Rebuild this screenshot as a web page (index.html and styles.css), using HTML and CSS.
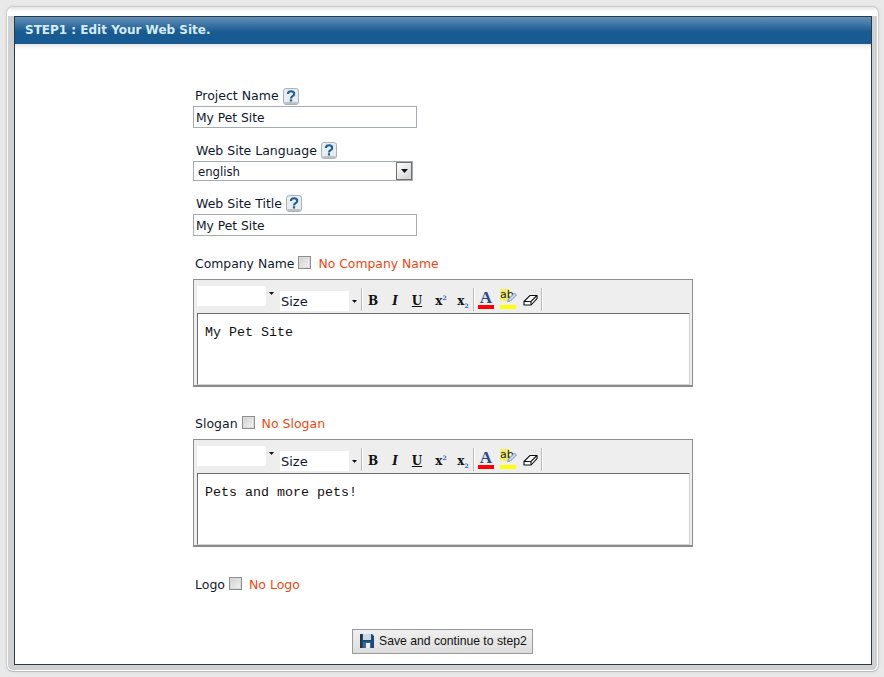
FILE: index.html
```
<!DOCTYPE html>
<html lang="en">
<head>
<meta charset="utf-8">
<title>Step 1</title>
<link rel="stylesheet" href="styles.css">
</head>
<body>
<svg class="defs" width="0" height="0" aria-hidden="true">
  <symbol id="help" viewBox="0 0 16 17">
    <rect x="0.5" y="0.5" width="15" height="16" rx="2.5" fill="#e8edf1" stroke="#aab2b8"/>
    <rect x="1.5" y="14" width="13" height="2" fill="#bcc2c7"/>
    <path d="M4.9 6.100C4.900 4.200 6.200 3.200 8 3.200s3.200 1 3.200 2.700c0 2.300-3.200 2.300-3.200 4.500" fill="none" stroke="#1f5f98" stroke-width="2.100"/>
    <rect x="6.900" y="11.300" width="2.200" height="2.200" fill="#1f5f98"/>
  </symbol>
  <symbol id="arrow" viewBox="0 0 7 4">
    <path d="M0 0h7L3.500 4z" fill="#111"/>
  </symbol>
  <symbol id="eraser" viewBox="0 0 15 17">
    <path d="M6 1h8M10 3h4" stroke="#d4d4d4" stroke-dasharray="1 1"/>
    <path d="M1 12.500 7 6.500h7v3l-6 6.500H1z" fill="#fff" stroke="#111" stroke-width="1.100"/>
    <path d="M1 12.500h7l6-6M8 12.500v3.500" fill="none" stroke="#111" stroke-width="1.100"/>
  </symbol>
  <symbol id="pen" viewBox="0 0 12 12">
    <path d="M1.500 10.500 2.500 8 8.500 2l2 2-6 6z" fill="#c8d6ea" stroke="#6f8fbd" stroke-width=".9"/>
  </symbol>
</svg>

<div class="shell">
  <main class="frame">
    <h1 class="titlebar">STEP1 : Edit Your Web Site.</h1>
    <div class="titleshade"></div>
    <form class="form">
      <div class="label label-project">Project Name <button type="button" class="help"><svg><use href="#help"/></svg></button></div>
      <input class="text" type="text" value="My Pet Site">

      <div class="label label-lang">Web Site Language <button type="button" class="help"><svg><use href="#help"/></svg></button></div>
      <div class="select">
        <span>english</span>
        <span class="select-btn"><svg class="arrow-sel"><use href="#arrow"/></svg></span>
      </div>

      <div class="label label-title">Web Site Title <button type="button" class="help"><svg><use href="#help"/></svg></button></div>
      <input class="text" type="text" value="My Pet Site">

      <div class="label label-company">Company Name <input class="check" type="checkbox"> <span class="none">No Company Name</span></div>
      <section class="editor">
        <div class="toolbar">
          <span class="combo combo-font"><span class="combo-arrow"><svg class="arrow-small"><use href="#arrow"/></svg></span></span>
          <span class="combo combo-size">Size<span class="combo-arrow"><svg class="arrow-small"><use href="#arrow"/></svg></span></span>
          <span class="sep"></span>
          <span class="tool tool-b">B</span><span class="tool tool-i">I</span><span class="tool tool-u">U</span>
          <span class="tool tool-x">x<sup>2</sup></span><span class="tool tool-x">x<sub>2</sub></span>
          <span class="sep"></span>
          <span class="tool tool-color">A</span>
          <span class="tool tool-hl">ab<svg class="pen"><use href="#pen"/></svg></span>
          <span class="tool tool-er"><svg class="eraser"><use href="#eraser"/></svg></span>
          <span class="sep"></span>
        </div>
        <div class="area">My Pet Site</div>
      </section>

      <div class="label label-slogan">Slogan <input class="check" type="checkbox"> <span class="none">No Slogan</span></div>
      <section class="editor">
        <div class="toolbar">
          <span class="combo combo-font"><span class="combo-arrow"><svg class="arrow-small"><use href="#arrow"/></svg></span></span>
          <span class="combo combo-size">Size<span class="combo-arrow"><svg class="arrow-small"><use href="#arrow"/></svg></span></span>
          <span class="sep"></span>
          <span class="tool tool-b">B</span><span class="tool tool-i">I</span><span class="tool tool-u">U</span>
          <span class="tool tool-x">x<sup>2</sup></span><span class="tool tool-x">x<sub>2</sub></span>
          <span class="sep"></span>
          <span class="tool tool-color">A</span>
          <span class="tool tool-hl">ab<svg class="pen"><use href="#pen"/></svg></span>
          <span class="tool tool-er"><svg class="eraser"><use href="#eraser"/></svg></span>
          <span class="sep"></span>
        </div>
        <div class="area">Pets and more pets!</div>
      </section>

      <div class="label label-logo">Logo <input class="check" type="checkbox"> <span class="none">No Logo</span></div>

      <div class="actions">
        <button type="button" class="save">
          <svg class="disk" viewBox="0 0 14 14">
            <path d="M0 0h12l2 2v12H0z" fill="#1d4a78"/>
            <rect x="0" y="0" width="2" height="14" fill="#2a3240"/>
            <rect x="3" y="0" width="8" height="6" fill="#c9d8e8"/>
            <rect x="3" y="8" width="8" height="6" fill="#3a6a9a"/>
            <rect x="6" y="9" width="4" height="5" fill="#f0f0f0"/>
          </svg>
          Save and continue to step2
        </button>
      </div>
    </form>
  </main>
</div>
</body>
</html>
```

FILE: styles.css
```
html, body {
  margin: 0;
  height: 100%;
}
body {
  background: #e9e9e9;
  font-family: "DejaVu Sans", Verdana, sans-serif;
  font-size: 12.5px;
  color: #10182e;
  overflow: hidden;
}
.defs {
  position: absolute;
}
.shell {
  box-sizing: border-box;
  width: 873px;
  height: 666px;
  margin: 6px 0 0 6px;
  padding: 9px 6px 6px 7px;
  background: linear-gradient(#e2e2e2 0, #f6f6f6 3px, #fff 5px, #fff 9px, #d0d0d0 9px);
  border: 1px solid #cdcdcd;
  border-bottom-color: #bdbdbd;
  border-radius: 7px;
  box-shadow: inset 0 -1px 0 #fff, inset 1px 0 0 #fff, inset -1px 0 0 #fff, 0 0 3px #d6d6d6;
}
.frame {
  box-sizing: border-box;
  height: 649px;
  background: #fff;
  border: 1px solid #2c3a46;
}
.titlebar {
  margin: 0;
  height: 27px;
  padding-left: 10px;
  font-size: 12px;
  font-weight: bold;
  line-height: 27px;
  color: #d7ecfa;
  background: linear-gradient(#6490b7 0, #185a92 55%, #185a92 100%);
}
.titleshade {
  height: 5px;
  background: linear-gradient(#e6e6e6, #fff);
}
.form {
  display: flex;
  flex-direction: column;
  align-items: flex-start;
  padding-left: 178px;
}
.label {
  display: flex;
  align-items: center;
  height: 18px;
  padding-left: 2px;
  white-space: pre;
}
.label-project { height: 16px; margin-top: 38px; margin-bottom: 3px; }
.label-project .help { margin-top: 3px; }
.label-lang { margin-top: 13px; margin-bottom: 2px; padding-left: 3px; }
.label-title { margin-top: 13px; margin-bottom: 2px; padding-left: 3px; }
.label-company { margin-top: 18px; margin-bottom: 7px; font-size: 12.4px; }
.label-slogan { margin-top: 27px; margin-bottom: 7px; }
.label-logo { margin-top: 28px; }
.help {
  width: 16px;
  height: 17px;
  padding: 0;
  border: 0;
  background: none;
  display: block;
}
.help svg {
  display: block;
  width: 16px;
  height: 17px;
}
.text {
  box-sizing: border-box;
  width: 224px;
  height: 22px;
  margin: 0;
  padding: 1px 2px 0;
  border: 1px solid #a5acb2;
  font: 12.3px "DejaVu Sans", Verdana, sans-serif;
  color: #10182e;
  outline: 0;
}
.select {
  box-sizing: border-box;
  position: relative;
  width: 220px;
  height: 20px;
  padding-left: 4px;
  border: 1px solid #a5acb2;
  font-size: 11.7px;
  line-height: 20px;
}
.select-btn {
  position: absolute;
  right: 0;
  top: 0;
  width: 16px;
  height: 18px;
  box-sizing: border-box;
  display: flex;
  align-items: center;
  justify-content: center;
  background: linear-gradient(135deg, #fff, #d2d2d2);
  border: 1px solid #707070;
}
.arrow-sel {
  width: 7px;
  height: 4px;
}
.check {
  appearance: none;
  box-sizing: border-box;
  width: 13px;
  height: 13px;
  margin: 0 0 1px;
  border: 1px solid #8e8e8e;
  background: linear-gradient(135deg, #cfcfcf, #f4f4f4);
  box-shadow: inset 0 0 0 1px #dcdcdc;
}
.none {
  color: #f0470f;
  margin-left: 7px;
  padding-top: 1px;
}
.editor {
  box-sizing: border-box;
  width: 500px;
  height: 108px;
  border: 1px solid #8f8f8f;
  border-bottom: 2px solid #8a8a8a;
  background: #eee;
}
.toolbar {
  display: flex;
  align-items: flex-start;
  height: 33px;
  padding-left: 3px;
}
.combo {
  box-sizing: border-box;
  position: relative;
  display: block;
  width: 80px;
  height: 20px;
  background: #fff;
  font: 13px/22px "DejaVu Sans", sans-serif;
}
.combo-font {
  margin-top: 6px;
}
.combo-size {
  margin: 11px 0 0 3px;
  padding-left: 1px;
}
.combo-arrow {
  position: absolute;
  right: 0;
  top: 0;
  width: 11px;
  height: 100%;
  background: #eee;
  display: flex;
  align-items: center;
  justify-content: center;
}
.combo-font .combo-arrow {
  align-items: flex-start;
  padding-top: 6px;
  box-sizing: border-box;
}
.arrow-small {
  width: 5px;
  height: 3px;
}
.sep {
  box-sizing: border-box;
  width: 2px;
  height: 23px;
  margin: 8px -1px 0 1px;
  background: #bbb;
  border-right: 1px solid #fff;
}
.sep:last-child {
  margin-left: 0;
}
.tool {
  position: relative;
  display: block;
  box-sizing: border-box;
  width: 22px;
  margin-top: 12px;
  text-align: center;
  font: bold 12px/18px "DejaVu Serif", serif;
  color: #111;
}
.tool-i { font-style: italic; }
.tool-u { text-decoration: underline; }
.tool-x { padding-left: 4px; }
.tool-x sup, .tool-x sub {
  font-size: 6px;
  color: #3a66b5;
  line-height: 0;
}
.tool-color {
  height: 22px;
  margin: 7px 0 0 1px;
  font: bold 17px/22px "Liberation Serif", serif;
  color: #24488f;
  background: linear-gradient(#f00, #f00) center bottom / 16px 4px no-repeat;
}
.tool-hl {
  height: 22px;
  margin-top: 7px;
  padding-left: 3px;
  font: 11px/15px "DejaVu Sans", sans-serif;
  text-align: left;
  color: #222;
  background:
    linear-gradient(#ff0, #ff0) center bottom / 16px 4px no-repeat,
    linear-gradient(#f1ef6b, #f1ef6b) 3px 2px / 10px 12px no-repeat;
}
.pen {
  position: absolute;
  left: 9px;
  top: 4px;
  width: 12px;
  height: 12px;
}
.tool-er {
  height: 22px;
  margin-top: 9px;
}
.eraser {
  display: block;
  width: 15px;
  height: 17px;
  margin: 0 auto;
}
.area {
  box-sizing: border-box;
  height: 72px;
  margin: 0 2px 0 3px;
  padding: 11px 7px;
  background: #fff;
  border: 1px solid #6d6d6d;
  border-right-color: #d4d4d4;
  border-bottom-color: #d4d4d4;
  font: 13.33px "Liberation Mono", monospace;
  color: #111;
}
.actions {
  align-self: stretch;
  display: flex;
  margin-top: 36px;
  padding-left: 159px;
}
.save {
  box-sizing: border-box;
  display: flex;
  align-items: center;
  gap: 5px;
  width: 181px;
  height: 25px;
  padding: 0 0 1px 7px;
  border: 1px solid #999;
  background: linear-gradient(#f0f0f0, #dcdcdc);
  font: 12.2px "Liberation Sans", Arial, sans-serif;
  color: #111;
}
.disk {
  width: 14px;
  height: 14px;
}
```
